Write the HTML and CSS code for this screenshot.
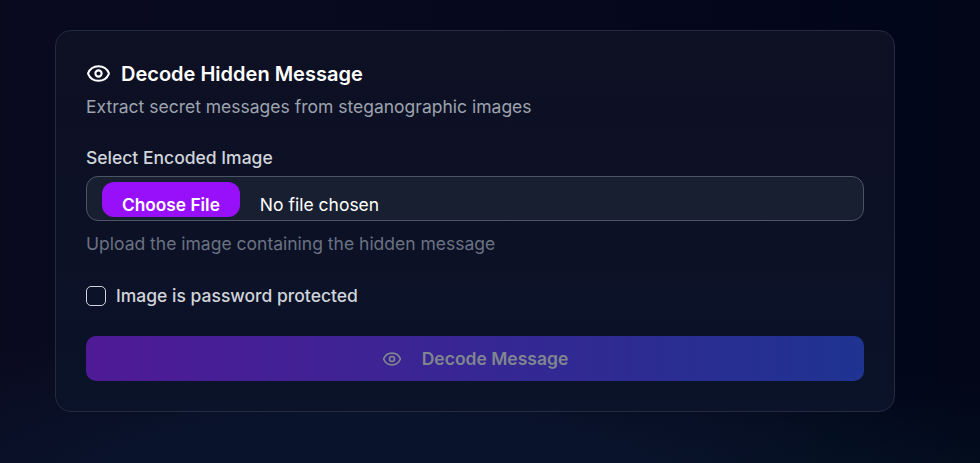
FILE: index.html
```html
<!DOCTYPE html>
<html lang="en">
<head>
<meta charset="utf-8">
<title>Decode Hidden Message</title>
<link rel="stylesheet" href="styles.css">
</head>
<body>
<main class="card">
  <h2 class="title">
    <svg class="title-icon" viewBox="0 0 24 24" fill="none" stroke="currentColor" stroke-width="2" stroke-linecap="round" stroke-linejoin="round"><path d="M2.062 12.348a1 1 0 0 1 0-.696 10.75 10.75 0 0 1 19.876 0 1 1 0 0 1 0 .696 10.75 10.75 0 0 1-19.876 0"/><circle cx="12" cy="12" r="3"/></svg>
    Decode Hidden Message
  </h2>
  <p class="subtitle">Extract secret messages from steganographic images</p>
  <div class="field">
    <label class="label" for="image">Select Encoded Image</label>
    <input class="file" id="image" type="file">
    <p class="hint">Upload the image containing the hidden message</p>
  </div>
  <label class="check">
    <input class="box" type="checkbox">
    <span>Image is password protected</span>
  </label>
  <button class="submit" type="button" disabled>
    <svg class="submit-icon" viewBox="0 0 24 24" fill="none" stroke="currentColor" stroke-width="2" stroke-linecap="round" stroke-linejoin="round"><path d="M2.062 12.348a1 1 0 0 1 0-.696 10.75 10.75 0 0 1 19.876 0 1 1 0 0 1 0 .696 10.75 10.75 0 0 1-19.876 0"/><circle cx="12" cy="12" r="3"/></svg>
    <span>Decode Message</span>
  </button>
</main>
</body>
</html>
```
FILE: styles.css
```css
* { box-sizing: border-box; }
html, body { height: 100%; }
body {
  margin: 0;
  padding: 30px 85px 0 55px;
  overflow: hidden;
  font-family: Inter, "Liberation Sans", sans-serif;
  background-color: #04081c;
  background-image:
    radial-gradient(ellipse 620px 170px at 38% 106%, #09132b 0%, #09132b 45%, rgba(9,19,43,0) 100%),
    radial-gradient(ellipse 380px 130px at 88% 108%, #03111f 0%, rgba(3,17,31,0) 100%),
    linear-gradient(90deg, #0a0a1f 0%, #070a1f 40%, #02061a 90%, #020618 100%);
}
.card {
  height: 382px;
  padding: 29px 30px;
  border: 1px solid #252a3c;
  border-radius: 16px;
  background: linear-gradient(180deg, #0e1023 0%, #0c1126 60%, #0a1329 100%);
}
.title {
  display: flex;
  align-items: center;
  gap: 10px;
  margin: 0;
  height: 28px;
  color: #fff;
  font-size: 20px;
  line-height: 28px;
  font-weight: 600;
}
.title-icon { width: 25px; height: 25px; flex: none; margin-top: -1px; }
.subtitle {
  margin: 7px 0 0;
  color: #9ca3af;
  font-size: 17.5px;
  line-height: 24px;
}
.field { margin-top: 27px; }
.label {
  display: block;
  margin-bottom: 6px;
  color: #d1d5db;
  font-size: 17.5px;
  line-height: 24px;
  font-weight: 500;
}
.file {
  display: block;
  width: 100%;
  height: 45px;
  padding: 5px 15px;
  overflow: hidden;
  border: 1px solid #4b5563;
  border-radius: 12px;
  background: #181f30;
  color: #fff;
  font: 400 17.5px/24px Inter, "Liberation Sans", sans-serif;
}
.file::file-selector-button {
  height: 35px;
  margin-right: 20px;
  padding: 11px 20px 0;
  border: 0;
  border-radius: 12px;
  background: #9810fa;
  color: #fff;
  font: 600 17.3px/24px Inter, "Liberation Sans", sans-serif;
}
.hint {
  margin: 11px 0 0;
  color: #6a7282;
  font-size: 17.5px;
  line-height: 24px;
}
.check {
  display: flex;
  align-items: center;
  gap: 10px;
  margin-top: 28px;
  color: #d1d5db;
  font-size: 17.5px;
  line-height: 24px;
  font-weight: 500;
}
.box {
  appearance: none;
  width: 20px;
  height: 20px;
  margin: 0;
  border: 1px solid #d1d5db;
  border-radius: 5px;
  background: transparent;
}
.submit {
  display: flex;
  align-items: center;
  justify-content: center;
  gap: 20px;
  width: 100%;
  height: 45px;
  margin-top: 28px;
  padding: 0;
  border: 0;
  border-radius: 10px;
  background: linear-gradient(90deg, #4f1a96 0%, #1f3391 100%);
  color: #80868f;
  font: 600 17.5px/28px Inter, "Liberation Sans", sans-serif;
}
.submit-icon { width: 20px; height: 20px; flex: none; }
```
